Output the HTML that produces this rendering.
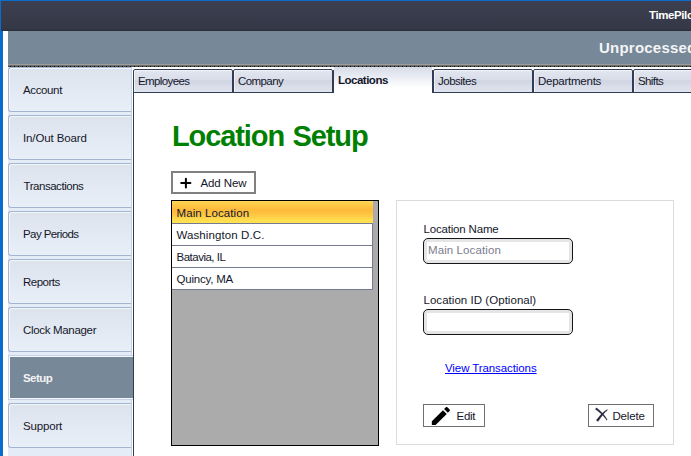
<!DOCTYPE html>
<html><head><meta charset="utf-8">
<style>
html,body{margin:0;padding:0;}
body{width:691px;height:456px;overflow:hidden;position:relative;background:#fff;font-family:"Liberation Sans",sans-serif;font-size:11.5px;color:#14172a;}
.abs{position:absolute;}
.t{position:absolute;white-space:nowrap;line-height:1;}
/* window chrome */
#topblue{left:0;top:0;width:691px;height:1px;background:#0a6ccd;}
#leftblue{left:0;top:31px;width:3px;height:425px;background:#0a6ccd;}
#leftblue2{left:0;top:0;width:1px;height:31px;background:#0a6ccd;}
#titlebar{left:1px;top:1px;width:690px;height:30px;background:linear-gradient(#3b3f4f,#343847 92%,#2a2d3a);}
#header{left:8px;top:31px;width:683px;height:33px;background:#778899;}
#hline1{left:8px;top:64px;width:683px;height:2px;background:linear-gradient(#9c9c9c 50%,#6c6c6c 50%);}
#hline2{left:8px;top:66px;width:683px;height:1px;background:repeating-linear-gradient(90deg,#555 0 1.7px,#0c0c0c 2.1px 3.1px,#555 3.5px 4px);}
#side{left:8px;top:67px;width:123px;height:389px;background:#e4ecf8;border-right:1px solid #c6d3e7;box-shadow:1px 0 0 #fff;}
.sb{position:absolute;left:8px;width:123px;height:45px;box-sizing:border-box;border:1px solid #a3b6d0;border-right:0;border-radius:3px 0 0 3px;background:linear-gradient(#dde3ec,#e9eff8);box-shadow:inset 1px 1px 0 #f3f6fb;}
#setup{left:8px;top:355px;width:125px;height:45px;box-sizing:border-box;border:1px solid #c6d3e7;border-right:0;background:#778899;box-shadow:inset 1px 1px 0 #f6f9fd,inset 0 -1px 0 #f6f9fd;}
/* tabs */
#tabstrip{left:133px;top:67px;width:558px;height:26px;background:#fff;}
.tab{position:absolute;top:69px;width:100px;height:24px;box-sizing:border-box;border:1px solid #333c55;border-radius:2px 2px 0 0;box-shadow:inset 1px 1px 0 rgba(255,255,255,.55);background:linear-gradient(#e2e6f0 0,#d9deea 42%,#d0d5e2 50%,#d8dce8 70%,#e0e4ee 100%);}
#tabact{left:334px;top:67px;width:98px;height:26px;background:linear-gradient(#d6dce8,#fff 80%);}
#content{left:133px;top:92px;width:560px;height:370px;box-sizing:border-box;border:1px solid #333c55;background:#fff;}
.btn{position:absolute;box-sizing:border-box;border:1px solid #707070;background:#fff;}
.inp{position:absolute;box-sizing:border-box;border:1px solid #15161c;border-radius:5px;background:#e5e5e5;width:150px;height:26px;}
.inp i{position:absolute;left:3px;top:3px;right:3px;bottom:3px;background:#fff;}
.row{position:absolute;left:172px;width:200px;height:21px;background:#fff;border-right:1px solid #757b90;border-bottom:1px solid #757b90;box-sizing:content-box;}
</style></head><body>
<div class="abs" id="titlebar"></div>
<div class="abs" id="header"></div>
<div class="abs" id="hline1"></div><div class="abs" id="hline2"></div>
<div class="abs" id="side"></div>
<div class="abs" id="leftblue"></div><div class="abs" id="topblue"></div>
<div class="abs" id="leftblue2"></div>

<span class="t" id="tp" style="letter-spacing:-0.4px;left:649px;top:10px;font-weight:bold;font-size:11.5px;color:#fff;">TimePilot Central</span>
<span class="t" id="un" style="letter-spacing:0.22px;left:599px;top:40px;font-weight:bold;font-size:15px;color:#f4f4f4;">Unprocessed Transactions</span>

<div class="sb" style="top:67px"></div>
<div class="sb" style="top:115px"></div>
<div class="sb" style="top:163px"></div>
<div class="sb" style="top:211px"></div>
<div class="sb" style="top:259px"></div>
<div class="sb" style="top:307px"></div>
<div class="abs" id="setup"></div>
<div class="sb" style="top:403px"></div>
<span class="t s" id="s1" style="letter-spacing:-0.37px;left:23px;top:85px;">Account</span>
<span class="t s" id="s2" style="letter-spacing:-0.12px;left:23px;top:133px;">In/Out Board</span>
<span class="t s" id="s3" style="letter-spacing:-0.46px;left:23.5px;top:181px;">Transactions</span>
<span class="t s" id="s4" style="letter-spacing:-0.59px;left:23px;top:229px;">Pay Periods</span>
<span class="t s" id="s5" style="letter-spacing:-0.5px;left:23px;top:277px;">Reports</span>
<span class="t s" id="s6" style="letter-spacing:-0.32px;left:23px;top:325px;">Clock Manager</span>
<span class="t s" id="s7" style="letter-spacing:-0.55px;left:23px;top:373px;font-weight:bold;color:#f2f2f2;">Setup</span>
<span class="t s" id="s8" style="letter-spacing:-0.17px;left:23px;top:421px;">Support</span>

<div class="abs" id="tabstrip"></div>
<div class="abs" id="content"></div>
<div class="tab" style="left:133px"></div>
<div class="tab" style="left:233px"></div>
<div class="tab" style="left:433px"></div>
<div class="tab" style="left:533px"></div>
<div class="tab" style="left:633px"></div>
<div class="abs" id="tabact"></div>
<div class="abs" style="left:333px;top:70px;width:1px;height:23px;background:#333c55;"></div>
<div class="abs" style="left:432px;top:70px;width:1px;height:23px;background:#333c55;"></div>
<span class="t" id="t1" style="letter-spacing:-0.62px;left:138px;top:76px;">Employees</span>
<span class="t" id="t2" style="letter-spacing:-0.58px;left:238px;top:76px;">Company</span>
<span class="t" id="t3" style="letter-spacing:-0.5px;left:338px;top:75px;font-weight:bold;">Locations</span>
<span class="t" id="t4" style="letter-spacing:-0.5px;left:438px;top:76px;">Jobsites</span>
<span class="t" id="t5" style="letter-spacing:-0.25px;left:538px;top:76px;">Departments</span>
<span class="t" id="t6" style="letter-spacing:-0.6px;left:638px;top:76px;">Shifts</span>

<span class="t" id="h1" style="letter-spacing:-1.1px;word-spacing:1.5px;left:172px;top:122px;font-size:29px;font-weight:bold;color:#008000;">Location Setup</span>

<div class="btn" style="left:171px;top:171px;width:85px;height:23px;border:2px solid #808080;"></div>
<svg class="abs" style="left:180px;top:177px" width="12" height="12" viewBox="0 0 12 12"><path d="M5.9 1.7V10.5M1.2 5.9H10.4" stroke="#000" stroke-width="2" stroke-linecap="round" fill="none"/></svg>
<span class="t" id="b1" style="letter-spacing:-0.1px;left:200.5px;top:178px;">Add New</span>

<div class="abs" style="left:171px;top:200px;width:208px;height:246px;box-sizing:border-box;border:1px solid #000;background:#ababab;"></div>
<div class="row" style="top:201px;width:201px;height:22px;border-right:0;border-bottom-color:#767b92;background:linear-gradient(#ffd85c 0,#ffcd4a 12%,#fdb93a 40%,#fec844 65%,#ffdc4e 85%,#ffe252 100%);"></div>
<div class="row" style="top:224px"></div>
<div class="row" style="top:246px"></div>
<div class="row" style="top:268px"></div>
<span class="t" id="l1" style="letter-spacing:0.08px;left:176.5px;top:208px;">Main Location</span>
<span class="t" id="l2" style="letter-spacing:0.1px;left:176.5px;top:230px;">Washington D.C.</span>
<span class="t" id="l3" style="letter-spacing:-0.5px;left:176.5px;top:252px;">Batavia, IL</span>
<span class="t" id="l4" style="letter-spacing:-0.2px;left:176.5px;top:274px;">Quincy, MA</span>

<div class="abs" style="left:396px;top:200px;width:278px;height:245px;box-sizing:border-box;border:1px solid #dcdcdc;"></div>
<span class="t" id="f1" style="letter-spacing:-0.18px;left:423.5px;top:224px;">Location Name</span>
<div class="inp" style="left:423px;top:238px"><i></i></div>
<span class="t" id="f2" style="letter-spacing:0.1px;left:428px;top:245px;color:#7b7d8c;">Main Location</span>
<span class="t" id="f3" style="letter-spacing:0.04px;left:423.5px;top:295px;">Location ID (Optional)</span>
<div class="inp" style="left:423px;top:309px"><i></i></div>
<span class="t" id="f4" style="letter-spacing:-0.09px;left:445px;top:363px;color:#0000ff;text-decoration:underline;">View Transactions</span>

<div class="btn" style="left:423px;top:404px;width:62px;height:23px;"></div>
<svg class="abs" style="left:428px;top:404px" width="26" height="24" viewBox="0 0 26 24"><path transform="translate(0.8,-0.1) scale(1.008)" d="M3 17.25V21h3.75L17.81 9.94l-3.75-3.75L3 17.25zM20.71 7.04c.39-.39.39-1.02 0-1.41l-2.34-2.34c-.39-.39-1.02-.39-1.41 0l-1.83 1.83 3.75 3.75 1.83-1.83z" fill="#000"/></svg>
<span class="t" id="b2" style="letter-spacing:-0.27px;left:456.5px;top:411px;">Edit</span>

<div class="btn" style="left:588px;top:404px;width:66px;height:23px;"></div>
<svg class="abs" style="left:594px;top:406px" width="16" height="18" viewBox="0 0 16 18"><path d="M1.33 3.26 L2.29 3.94 L3.21 4.61 L4.10 5.28 L4.95 5.96 L5.77 6.64 L6.56 7.32 L7.31 7.99 L8.03 8.67 L8.72 9.36 L9.37 10.04 L9.99 10.72 L10.58 11.41 L11.13 12.10 L11.65 12.79 L12.14 13.48 L12.60 14.17 L13.20 13.83 L12.80 13.07 L12.36 12.32 L11.88 11.56 L11.37 10.80 L10.83 10.05 L10.24 9.29 L9.62 8.53 L8.97 7.78 L8.28 7.02 L7.56 6.26 L6.79 5.51 L6.00 4.75 L5.17 4.00 L4.30 3.24 L3.40 2.49 L2.47 1.74Z M13.21 3.51 L12.56 3.89 L11.91 4.32 L11.26 4.78 L10.60 5.28 L9.93 5.82 L9.26 6.40 L8.58 7.01 L7.90 7.67 L7.21 8.36 L6.52 9.09 L5.82 9.85 L5.11 10.66 L4.41 11.50 L3.69 12.38 L2.97 13.30 L2.25 14.25 L4.15 15.55 L4.77 14.56 L5.39 13.62 L6.00 12.70 L6.61 11.83 L7.22 10.99 L7.82 10.18 L8.41 9.42 L9.00 8.68 L9.59 7.99 L10.17 7.32 L10.75 6.70 L11.33 6.11 L11.90 5.55 L12.47 5.03 L13.03 4.54 L13.59 4.09Z" fill="#23263a" stroke="#23263a" stroke-width="0.25" stroke-linejoin="round"/></svg>
<span class="t" id="b3" style="letter-spacing:-0.18px;left:612.5px;top:411px;">Delete</span>
</body></html>
